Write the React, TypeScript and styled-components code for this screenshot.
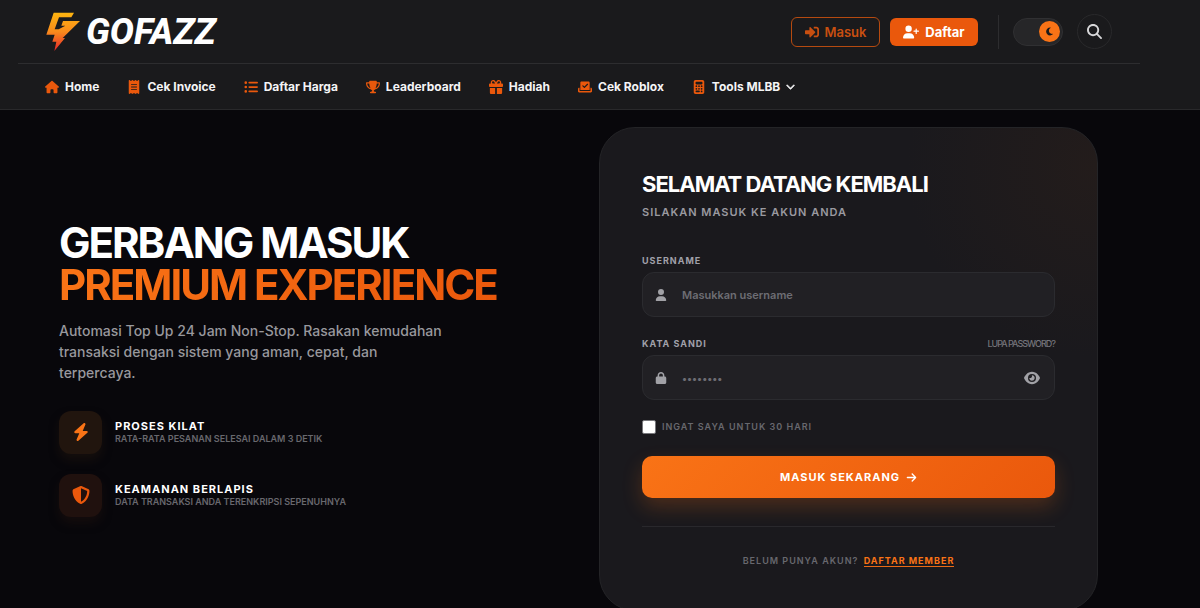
import React from "react";
import styled, { createGlobalStyle } from "styled-components";
import {
  FaHouse, FaReceipt, FaListUl, FaTrophy, FaGift, FaCheckToSlot, FaCalculator, FaUserPlus,
  FaMoon, FaMagnifyingGlass, FaBolt, FaShieldHalved, FaUser, FaLock, FaEye, FaArrowRight, FaChevronDown,
} from "react-icons/fa6";
import { FaSignInAlt } from "react-icons/fa";

const Global = createGlobalStyle`
  *, *::before, *::after { box-sizing: border-box; }
  body {
    margin: 0;
    background: #08070b;
    color: #fff;
    font-family: Inter, "Liberation Sans", sans-serif;
  }
  h1, h2, h3, p, ul { margin: 0; padding: 0; }
  button, input { font-family: inherit; }
`;

const Page = styled.div`
  overflow: hidden;
`;

const Header = styled.header`
  background: #1a1a1c;
  border-bottom: 1px solid #29292b;
`;

const TopBar = styled.div`
  display: flex;
  align-items: center;
  justify-content: space-between;
  height: 64px;
  margin: 0 60px 0 18px;
  padding: 0 28px;
  border-bottom: 1px solid #2d2d2f;
`;

const Brand = styled.a`
  display: flex;
  align-items: center;
  gap: 4px;
  color: #fff;
  text-decoration: none;
`;

const BrandMark = styled.svg`
  width: 36px;
  height: 40px;
`;

const BrandName = styled.span`
  font: italic 800 36px/40px Roboto, "Liberation Sans", sans-serif;
`;

const Actions = styled.div`
  display: flex;
  align-items: center;
`;

const ActionButton = styled.button<{ $solid?: boolean }>`
  display: flex;
  align-items: center;
  justify-content: center;
  gap: 6px;
  width: ${(p) => (p.$solid ? 88 : 89)}px;
  height: ${(p) => (p.$solid ? 28 : 30)}px;
  margin-right: 10px;
  padding: 0;
  border: ${(p) => (p.$solid ? "0" : "1px solid #b54a10")};
  border-radius: 6px;
  background: ${(p) => (p.$solid ? "#ea580c" : "transparent")};
  color: ${(p) => (p.$solid ? "#fff" : "#c94f10")};
  font-size: 13px;
  font-weight: ${(p) => (p.$solid ? 700 : 600)};
  svg { font-size: ${(p) => (p.$solid ? 16 : 14)}px; }
`;

const Divider = styled.span`
  width: 1px;
  height: 34px;
  margin: 0 14px 0 10px;
  background: #2d2d2f;
`;

const ThemeSwitch = styled.button`
  display: flex;
  align-items: center;
  justify-content: flex-end;
  width: 50px;
  height: 28px;
  margin-right: 14px;
  padding: 0 2px;
  border: 1px solid #303032;
  border-radius: 14px;
  background: #262628;
`;

const Knob = styled.span`
  display: grid;
  place-items: center;
  width: 21px;
  height: 21px;
  border-radius: 50%;
  background: #f97316;
  color: #1a1a1c;
  font-size: 9px;
`;

const SearchButton = styled.button`
  display: grid;
  place-items: center;
  width: 35px;
  height: 35px;
  padding: 0;
  border: 1px solid #29292b;
  border-radius: 50%;
  background: #1a1a1c;
  color: #d6d6d8;
  font-size: 15px;
`;

const Nav = styled.nav`
  display: flex;
  align-items: center;
  gap: 28px;
  height: 45px;
  padding: 0 45px;
`;

const NavLink = styled.a`
  display: flex;
  align-items: center;
  gap: 6px;
  color: #f4f4f5;
  font-size: 12px;
  font-weight: 700;
  line-height: 20px;
  text-decoration: none;
  white-space: nowrap;
`;

const NavIcon = styled.span`
  display: flex;
  color: #ea580c;
  svg {
    width: auto;
    height: 14px;
  }
`;

const Caret = styled(FaChevronDown)`
  stroke: currentColor;
  stroke-width: 30px;
  font-size: 9px;
`;

const Main = styled.main`
  display: grid;
  grid-template-columns: minmax(0, 1fr) 499px;
  align-items: center;
  gap: 40px;
  padding: 17px 102px 0 59px;
`;

const Title = styled.h1`
  font-size: 42px;
  font-weight: 700;
  line-height: 42px;
  letter-spacing: -2px;
  white-space: nowrap;
`;

const Accent = styled.span`
  display: table;
  background: linear-gradient(90deg, #f97316, #ea580c);
  background-clip: text;
  -webkit-background-clip: text;
  color: transparent;
`;

const Lead = styled.p`
  max-width: 390px;
  margin-top: 14px;
  color: #98989d;
  font-size: 14px;
  font-weight: 500;
  line-height: 21px;
`;

const Features = styled.ul`
  display: grid;
  gap: 20px;
  margin-top: 28px;
  list-style: none;
`;

const Feature = styled.li`
  display: flex;
  align-items: center;
  gap: 13px;
`;

const FeatureIcon = styled.span<{ $color: string; $bg: string }>`
  display: grid;
  place-items: center;
  width: 43px;
  height: 43px;
  border-radius: 12px;
  background: ${(p) => p.$bg};
  box-shadow: 0 6px 10px ${(p) => p.$bg}80;
  color: ${(p) => p.$color};
  font-size: 18px;
`;

const FeatureTitle = styled.h3`
  font-size: 11px;
  font-weight: 700;
  line-height: 14px;
  letter-spacing: 1px;
`;

const FeatureText = styled.p`
  color: #68686e;
  font-size: 9px;
  font-weight: 600;
  line-height: 12px;
`;

const Card = styled.section`
  padding: 43px 42px 42px;
  border: 1px solid #242427;
  border-radius: 36px;
  background: radial-gradient(circle at 100% 8%, #231c1b 0, #1a191d 190px);
`;

const CardTitle = styled.h2`
  font-size: 22px;
  font-weight: 700;
  line-height: 26px;
  letter-spacing: -1px;
`;

const CardSub = styled.p`
  margin-top: 8px;
  color: #9a9aa0;
  font-size: 11px;
  font-weight: 600;
  line-height: 14px;
  letter-spacing: 1px;
`;

const LabelRow = styled.div`
  display: flex;
  justify-content: space-between;
  align-items: center;
  height: 12px;
  margin-bottom: 6px;
`;

const Label = styled.label`
  color: #a1a1aa;
  font-size: 9px;
  font-weight: 700;
  letter-spacing: 1px;
`;

const Forgot = styled.a`
  color: #75757b;
  font-size: 9px;
  font-weight: 500;
  letter-spacing: -1px;
  text-decoration: none;
`;

const Field = styled.div`
  display: flex;
  align-items: center;
  height: 45px;
  padding: 0 14px 0 12px;
  border: 1px solid #2b2b2f;
  border-radius: 12px;
  background: #212024;
  color: #a1a1a6;
  font-size: 12px;
`;

const Input = styled.input`
  flex: 1;
  min-width: 0;
  height: 42px;
  padding: 0 0 0 15px;
  border: 0;
  outline: 0;
  background: transparent;
  color: #fff;
  font-size: 11px;
  font-weight: 600;
  &::placeholder { color: #6d6d73; opacity: 1; }
  &[type="password"]::placeholder { font-size: 10px; }
`;

const EyeButton = styled.button`
  display: flex;
  padding: 0;
  border: 0;
  background: none;
  color: #a1a1a6;
  font-size: 16px;
`;

const Remember = styled.label`
  display: flex;
  align-items: center;
  gap: 6px;
  margin-top: 20px;
  color: #68686e;
  font-size: 9px;
  font-weight: 600;
  line-height: 14px;
  letter-spacing: 1px;
`;

const Check = styled.input`
  width: 14px;
  height: 14px;
  margin: 0;
  border: 1px solid #77777b;
  border-radius: 2px;
  appearance: none;
  background: #fff;
  &:checked { background: #f97316; }
`;

const Submit = styled.button`
  display: flex;
  align-items: center;
  justify-content: center;
  gap: 6px;
  width: 100%;
  height: 42px;
  margin-top: 22px;
  border: 0;
  border-radius: 10px;
  background: linear-gradient(135deg, #f97316, #ea580c);
  box-shadow: 0 9px 20px #f9731638;
  color: #fff;
  font-size: 11px;
  font-weight: 700;
  letter-spacing: 1px;
`;

const CardFoot = styled.p`
  margin-top: 28px;
  padding-top: 27px;
  border-top: 1px solid #29282c;
  color: #68686e;
  font-size: 9px;
  font-weight: 600;
  line-height: 14px;
  letter-spacing: 1px;
  text-align: center;
`;

const Join = styled.a`
  margin-left: 2px;
  border-bottom: 1px solid #ea6a16;
  color: #f97316;
  font-weight: 700;
  text-decoration: none;
`;

const Group = styled.div<{ $top: number }>`
  margin-top: ${(p) => p.$top}px;
`;

const links = [
  { text: "Home", icon: <FaHouse /> },
  { text: "Cek Invoice", icon: <FaReceipt /> },
  { text: "Daftar Harga", icon: <FaListUl /> },
  { text: "Leaderboard", icon: <FaTrophy /> },
  { text: "Hadiah", icon: <FaGift /> },
  { text: "Cek Roblox", icon: <FaCheckToSlot /> },
  { text: "Tools MLBB", icon: <FaCalculator />, menu: true },
];

export default function App() {
  return (
    <Page>
      <Global />
      <Header>
        <TopBar>
          <Brand href="#">
            <BrandMark viewBox="12 9 108 120" aria-hidden="true">
              <defs>
                <linearGradient id="bolt" x1="0" y1="0" x2="0" y2="1">
                  <stop offset="0" stopColor="#fdb50f" />
                  <stop offset="0.5" stopColor="#f98a1c" />
                  <stop offset="1" stopColor="#e6252b" />
                </linearGradient>
              </defs>
              <path
                fill="url(#bolt)"
                d="M35 11H96L88 25H51L38 61H50L70 50H58L63 36H114L62 87H69L37 126L43 98H31L38 77H13Z"
              />
            </BrandMark>
            <BrandName>GOFAZZ</BrandName>
          </Brand>
          <Actions>
            <ActionButton type="button"><FaSignInAlt />Masuk</ActionButton>
            <ActionButton type="button" $solid><FaUserPlus />Daftar</ActionButton>
            <Divider />
            <ThemeSwitch type="button" aria-label="Mode gelap"><Knob><FaMoon /></Knob></ThemeSwitch>
            <SearchButton type="button" aria-label="Cari"><FaMagnifyingGlass /></SearchButton>
          </Actions>
        </TopBar>
        <Nav>
          {links.map((l) => (
            <NavLink href="#" key={l.text}>
              <NavIcon>{l.icon}</NavIcon>
              {l.text}
              {l.menu && <Caret />}
            </NavLink>
          ))}
        </Nav>
      </Header>
      <Main>
        <div>
          <Title>GERBANG MASUK<Accent>PREMIUM EXPERIENCE</Accent></Title>
          <Lead>
            Automasi Top Up 24 Jam Non-Stop. Rasakan kemudahan transaksi dengan sistem yang aman, cepat, dan terpercaya.
          </Lead>
          <Features>
            <Feature>
              <FeatureIcon $color="#f97316" $bg="#21150e"><FaBolt /></FeatureIcon>
              <div>
                <FeatureTitle>PROSES KILAT</FeatureTitle>
                <FeatureText>RATA-RATA PESANAN SELESAI DALAM 3 DETIK</FeatureText>
              </div>
            </Feature>
            <Feature>
              <FeatureIcon $color="#ea580c" $bg="#20110e"><FaShieldHalved /></FeatureIcon>
              <div>
                <FeatureTitle>KEAMANAN BERLAPIS</FeatureTitle>
                <FeatureText>DATA TRANSAKSI ANDA TERENKRIPSI SEPENUHNYA</FeatureText>
              </div>
            </Feature>
          </Features>
        </div>
        <Card>
          <CardTitle>SELAMAT DATANG KEMBALI</CardTitle>
          <CardSub>SILAKAN MASUK KE AKUN ANDA</CardSub>
          <form>
            <Group $top={35}>
              <LabelRow><Label htmlFor="username">USERNAME</Label></LabelRow>
              <Field>
                <FaUser />
                <Input id="username" type="text" placeholder="Masukkan username" />
              </Field>
            </Group>
            <Group $top={20}>
              <LabelRow>
                <Label htmlFor="password">KATA SANDI</Label>
                <Forgot href="#">LUPA PASSWORD?</Forgot>
              </LabelRow>
              <Field>
                <FaLock />
                <Input id="password" type="password" placeholder="••••••••" />
                <EyeButton type="button" aria-label="Tampilkan kata sandi"><FaEye /></EyeButton>
              </Field>
            </Group>
            <Remember><Check type="checkbox" />INGAT SAYA UNTUK 30 HARI</Remember>
            <Submit type="submit">MASUK SEKARANG <FaArrowRight /></Submit>
          </form>
          <CardFoot>BELUM PUNYA AKUN? <Join href="#">DAFTAR MEMBER</Join></CardFoot>
        </Card>
      </Main>
    </Page>
  );
}
